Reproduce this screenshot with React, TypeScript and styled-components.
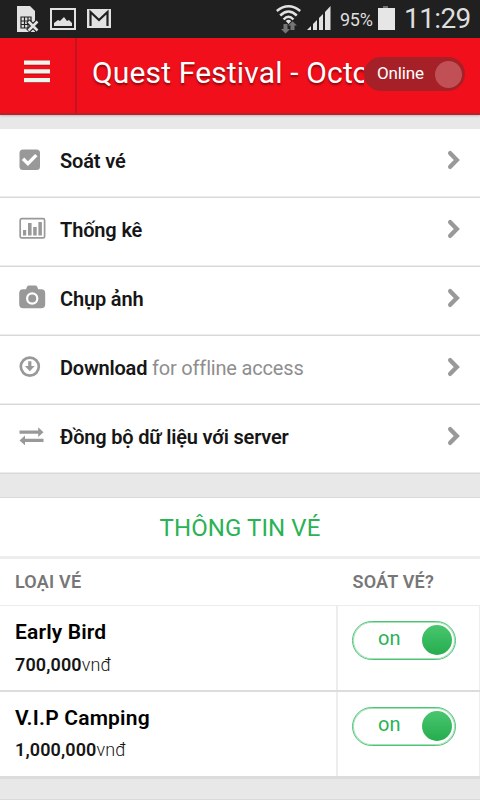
import React from "react";
import styled, { createGlobalStyle } from "styled-components";

const GlobalStyle = createGlobalStyle`
  * { box-sizing: border-box; }
  html, body { margin: 0; background: #e8e8e8; }
  body { font-family: Roboto, "Noto Sans", sans-serif; color: #161616; overflow: hidden; }
  svg { display: block; flex: none; }
`;

const Screen = styled.div`
  width: 480px;
  height: 800px;
  overflow: hidden;
  display: flex;
  flex-direction: column;
  background: #e8e8e8;
`;

const StatusBar = styled.header`
  height: 38px;
  flex: none;
  display: flex;
  justify-content: space-between;
  background: #202020;
  color: #dedede;
`;

const StatusGroup = styled.div`
  display: flex;
`;

const Battery = styled.span`
  width: 37px;
  padding-top: 1px;
  font-size: 18px;
  line-height: 38px;
  letter-spacing: -0.25px;
  white-space: nowrap;
`;

const Clock = styled.span`
  width: 76px;
  font-size: 28px;
  line-height: 37px;
  letter-spacing: -0.6px;
  white-space: nowrap;
`;

const AppBar = styled.div`
  height: 77px;
  flex: none;
  display: flex;
  background: #f00f1a;
  border-bottom: 2px solid #b8232b;
  box-shadow: 0 1px 2px rgba(0, 0, 0, 0.2);
`;

const MenuButton = styled.button`
  width: 77px;
  padding: 0 0 7px 24px;
  border: 0;
  border-right: 2px solid #c3141d;
  background: none;
`;

const EventTitle = styled.h1`
  width: 287px;
  margin: 0;
  padding-left: 15px;
  overflow: hidden;
  white-space: nowrap;
  color: #fff;
  font-size: 30px;
  font-weight: 400;
  line-height: 69px;
  letter-spacing: 0.15px;
  text-shadow: 0 2px 2px rgba(70, 0, 0, 0.55);
`;

const OnlineSwitch = styled.div`
  width: 101px;
  height: 34px;
  margin-top: 19px;
  padding: 0 3px 0 13px;
  display: flex;
  align-items: center;
  justify-content: space-between;
  border-radius: 17px;
  background: #a62127;
  color: #fff;
  font-size: 17px;
  letter-spacing: -0.15px;
`;

const OnlineText = styled.span`
  padding-bottom: 2px;
`;

const OnlineKnob = styled.span`
  width: 27px;
  height: 27px;
  border-radius: 50%;
  background: #c15056;
`;

const Menu = styled.nav`
  margin-top: 14px;
  flex: none;
  background: #fff;
`;

const MenuItem = styled.div`
  height: 69px;
  padding: 0 19px 7px 19px;
  display: flex;
  align-items: center;
  border-bottom: 1px solid #d8d8d8;
  box-shadow: inset 0 -1px #ededed;
`;

const IconSlot = styled.span`
  width: 41px;
  flex: none;
`;

const MenuLabel = styled.span<{ $spacing: number }>`
  flex: 1;
  padding-top: 3px;
  font-size: 20px;
  line-height: 28px;
  font-weight: 600;
  letter-spacing: ${(p) => p.$spacing}px;
  white-space: nowrap;
`;

const Muted = styled.span`
  color: #8e8e8e;
  font-weight: 400;
  letter-spacing: -0.18px;
`;

const TicketPanel = styled.section`
  margin-top: 23px;
  flex: none;
  border-top: 1px solid #dadada;
  border-bottom: 3px solid #dcdcdc;
  background: #fff;
`;

const PanelTitle = styled.h2`
  height: 61px;
  margin: 0;
  border-bottom: 3px solid #ededed;
  color: #2ab254;
  font-size: 24px;
  font-weight: 400;
  line-height: 60px;
  letter-spacing: 0.1px;
  text-align: center;
`;

const TicketRow = styled.div<{ $last?: boolean }>`
  height: ${(p) => (p.$last ? 84 : 86)}px;
  display: grid;
  grid-template-columns: 336px 144px;
  border-bottom: ${(p) => (p.$last ? 0 : 2)}px solid #dcdcdc;
`;

const ColumnHeads = styled.div`
  height: 47px;
  display: grid;
  grid-template-columns: 337.5px 142.5px;
  border-bottom: 1px solid #ececec;
  color: #777;
  font-size: 18px;
  font-weight: 600;
  line-height: 46px;
`;

const ColumnHead = styled.span`
  padding-left: 15px;
  letter-spacing: 0.2px;
`;

const TicketInfo = styled.div`
  padding: 13px 0 0 15px;
`;

const TicketName = styled.div<{ $spacing: number }>`
  color: #000;
  font-size: 21px;
  font-weight: 600;
  line-height: 27px;
  letter-spacing: ${(p) => p.$spacing}px;
`;

const Price = styled.div<{ $offset: number }>`
  margin-top: ${(p) => p.$offset}px;
  font-size: 18px;
  line-height: 26px;
  letter-spacing: 0.12px;
`;

const Amount = styled.b`
  font-weight: 600;
`;

const Currency = styled.span`
  font-weight: 300;
`;

const SwitchCell = styled.div`
  padding: 15px 0 0 14px;
  border-left: 2px solid #ededed;
  border-right: 1px solid #ededed;
`;

const CheckSwitch = styled.div`
  width: 104px;
  height: 39px;
  padding: 0 3px 1px 24px;
  display: flex;
  align-items: center;
  justify-content: space-between;
  border: 1px solid #4fc376;
  border-radius: 20px;
  box-shadow: inset 0 0 0 1px #a7e1ba;
  color: #2ab254;
  font-size: 20px;
  line-height: 32px;
`;

const SwitchText = styled.span`
  padding: 0 0 5px 1px;
`;

const SwitchKnob = styled.span`
  width: 30px;
  height: 30px;
  border-radius: 50%;
  background: linear-gradient(#49c66f, #25ad4e);
`;

const Footer = styled.div`
  flex: 1;
  border-bottom: 1px solid #dadada;
`;

const MENU = [
  { icon: "check", label: "Soát vé", spacing: -0.15 },
  { icon: "chart", label: "Thống kê", spacing: -0.15 },
  { icon: "camera", label: "Chụp ảnh", spacing: -0.15 },
  { icon: "download", label: "Download", spacing: -0.2, note: "for offline access" },
  { icon: "sync", label: "Đồng bộ dữ liệu với server", spacing: -0.18 },
];

const TICKETS = [
  { name: "Early Bird", price: "700,000", spacing: 0.15, offset: 6 },
  { name: "V.I.P Camping", price: "1,000,000", spacing: 0.2, offset: 5 },
];

function MenuIcon({ name }: { name: string }) {
  return (
    <svg width="28" height="26" viewBox="0 0 28 26" fill="#999">
      {name === "check" && (
        <>
          <rect x="0.5" y="2.5" width="20.5" height="20.5" rx="3.5" />
          <path d="M5.200 13l3.700 3.700 7.200-7.400" fill="none" stroke="#fff" strokeWidth="3.400" strokeLinecap="square" />
        </>
      )}
      {name === "chart" && (
        <>
          <rect x="1.2" y="2.700" width="24.4" height="19.2" rx="1.5" fill="none" stroke="#999" strokeWidth="1.700" />
          <path d="M4 14h3.200v5.500H4zM9 7h3.600v12.500H9zM14.200 11h3.500v8.500h-3.500zM19.400 6h3.500v13.500h-3.500z" />
        </>
      )}
      {name === "camera" && (
        <>
          <path d="M4 4.200h3l1-2.400Q8.500.5 10 .5h6.200q1.500 0 2 1.300l1 2.400h3q4 0 4 4v11q0 4-4 4H4.200q-4 0-4-4v-11q0-4 4-4z" />
          <circle cx="13.200" cy="13.500" r="5.100" fill="none" stroke="#fff" strokeWidth="2.200" />
        </>
      )}
      {name === "download" && (
        <>
          <circle cx="10.800" cy="12.600" r="9" fill="none" stroke="#999" strokeWidth="2.700" />
          <path d="M9.200 7.200h3.200v4.900h3.300l-4.900 5.200-4.900-5.200h3.300z" />
        </>
      )}
      {name === "sync" && (
        <path d="M.5 7.500h18.700V4.300l5.300 4.900-5.300 4.900v-3.300H.5zM24.500 15.800H6v-3.300L.5 17.400 6 22.300v-3.200h18.500z" />
      )}
    </svg>
  );
}

function Chevron() {
  return (
    <svg width="14" height="20" viewBox="0 0 14 20">
      <path d="M3.200 3.200l6.600 6.800-6.600 6.800" fill="none" stroke="#999" strokeWidth="4.400" strokeLinecap="round" />
    </svg>
  );
}

function Notifications() {
  return (
    <svg width="125" height="38" viewBox="0 0 125 38" fill="#e2e2e2">
      <path d="M17 6h13l5 5v21H17z" />
      <path d="M21 17h10v11H21zM24.500 17v11M28 17v11M21 21h10M21 24.500h10" fill="none" stroke="#202020" strokeWidth="1.200" />
      <path d="M28 21l10 10M38 21L28 31" stroke="#202020" strokeWidth="5" />
      <path d="M28.500 21.500l9 9M37.500 21.500l-9 9" stroke="#e2e2e2" strokeWidth="2.600" />
      <path fillRule="evenodd" d="M50 8h26v22H50zM52 10v18h22V10z" />
      <path d="M54 26v-3l4-3 2 1 4-4 3 4 2-1 3 3v3z" />
      <path d="M87 9h24v19H87z" />
      <path d="M90.500 26V12l8.500 8 8.500-8v14" fill="none" stroke="#202020" strokeWidth="2.200" />
    </svg>
  );
}

function Signals() {
  return (
    <svg width="65" height="38" viewBox="0 0 65 38" fill="#e2e2e2">
      <g fill="none" stroke="#e2e2e2" strokeWidth="2.500">
        <path d="M1.800 11Q13.500 1.500 25.200 11" />
        <path d="M5.200 15.500Q13.500 7.500 21.800 15.500" />
        <path d="M8.600 19.500Q13.500 14 18.400 19.500" />
      </g>
      <path d="M10.800 21q2.700-2.400 5.400 0l-2.700 3z" />
      <path d="M8.500 24h4v5h2.500l-4.500 4.500L6 29h2.500zM15.500 30v-4.500H13l4.500-4.200 4.500 4.200h-2.500V30z" fill="#747474" />
      <path d="M32 30l4-4v4zM38 24l4-4v10h-4zM44 18l4-4v16h-4zM50 12l5.500-6v24H50z" />
    </svg>
  );
}

export default function App() {
  return (
    <>
      <GlobalStyle />
      <Screen>
        <StatusBar>
          <Notifications />
          <StatusGroup>
            <Signals />
            <Battery>95%</Battery>
            <svg width="27" height="38" viewBox="0 0 27 38">
              <path d="M6 6h5v2H6z" fill="#707070" />
              <path d="M1 8h17v22H1z" fill="#e6e6e6" />
            </svg>
            <Clock>11:29</Clock>
          </StatusGroup>
        </StatusBar>
        <AppBar>
          <MenuButton aria-label="Menu">
            <svg width="27" height="24" viewBox="0 0 27 24">
              <path d="M0 1.500h26v4H0zM0 10.500h26v4H0zM0 19h26v4H0z" fill="#7d0a10" opacity=".5" />
              <path d="M0 .5h26v4.200H0zM0 9.200h26v4.200H0zM0 18h26v4.200H0z" fill="#edf5ec" />
            </svg>
          </MenuButton>
          <EventTitle>Quest Festival - Octo</EventTitle>
          <OnlineSwitch>
            <OnlineText>Online</OnlineText>
            <OnlineKnob />
          </OnlineSwitch>
        </AppBar>
        <Menu>
          {MENU.map((item) => (
            <MenuItem key={item.icon}>
              <IconSlot>
                <MenuIcon name={item.icon} />
              </IconSlot>
              <MenuLabel $spacing={item.spacing}>
                {item.label}
                {item.note && <Muted> {item.note}</Muted>}
              </MenuLabel>
              <Chevron />
            </MenuItem>
          ))}
        </Menu>
        <TicketPanel>
          <PanelTitle>THÔNG TIN VÉ</PanelTitle>
          <ColumnHeads>
            <ColumnHead>LOẠI VÉ</ColumnHead>
            <ColumnHead>SOÁT VÉ?</ColumnHead>
          </ColumnHeads>
          {TICKETS.map((ticket, i) => (
            <TicketRow key={ticket.name} $last={i === TICKETS.length - 1}>
              <TicketInfo>
                <TicketName $spacing={ticket.spacing}>{ticket.name}</TicketName>
                <Price $offset={ticket.offset}>
                  <Amount>{ticket.price}</Amount>
                  <Currency>vnđ</Currency>
                </Price>
              </TicketInfo>
              <SwitchCell>
                <CheckSwitch>
                  <SwitchText>on</SwitchText>
                  <SwitchKnob />
                </CheckSwitch>
              </SwitchCell>
            </TicketRow>
          ))}
        </TicketPanel>
        <Footer />
      </Screen>
    </>
  );
}
